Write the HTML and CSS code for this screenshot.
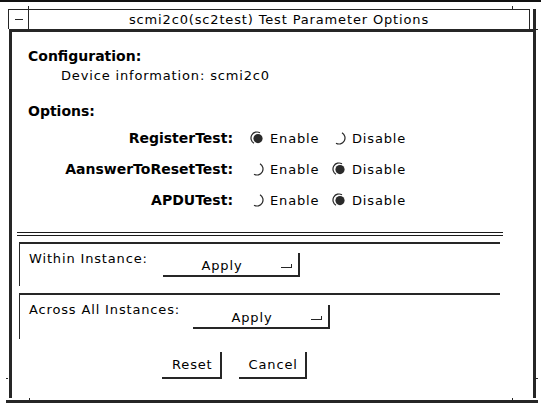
FILE: index.html
```html
<!DOCTYPE html>
<html>
<head>
<meta charset="utf-8">
<link rel="stylesheet" href="styles.css">
</head>
<body>
<div class="topline"></div>
<div class="window">
  <span class="tick tick-top1"></span>
  <span class="tick tick-top2"></span>
  <span class="tick tick-rtop"></span>
  <span class="tick tick-left"></span>
  <span class="tick tick-right"></span>
  <span class="tick tick-bot1"></span>
  <span class="tick tick-bot2"></span>
  <div class="titlebar">
    <div class="minbox"><span class="dash"></span></div>
    <div class="title">scmi2c0(sc2test) Test Parameter Options</div>
  </div>
  <div class="client">
    <div class="config">
      <h2 class="heading">Configuration:</h2>
      <p class="info">Device information: scmi2c0</p>
      <h2 class="heading opts-head">Options:</h2>
      <div class="options">
        <div class="opt-label">RegisterTest:</div>
        <div class="radio"><svg class="rb" viewBox="0 0 14 14"><path d="M10 1.8 A6 6 0 0 0 4 12.2" /><circle cx="8" cy="7.6" r="4.6"/></svg><span>Enable</span></div>
        <div class="radio"><svg class="rb" viewBox="0 0 14 14"><path d="M4 12.2 A6 6 0 0 0 10 1.8" /></svg><span>Disable</span></div>

        <div class="opt-label">AanswerToResetTest:</div>
        <div class="radio"><svg class="rb" viewBox="0 0 14 14"><path d="M4 12.2 A6 6 0 0 0 10 1.8" /></svg><span>Enable</span></div>
        <div class="radio"><svg class="rb" viewBox="0 0 14 14"><path d="M10 1.8 A6 6 0 0 0 4 12.2" /><circle cx="8" cy="7.6" r="4.6"/></svg><span>Disable</span></div>

        <div class="opt-label">APDUTest:</div>
        <div class="radio"><svg class="rb" viewBox="0 0 14 14"><path d="M4 12.2 A6 6 0 0 0 10 1.8" /></svg><span>Enable</span></div>
        <div class="radio"><svg class="rb" viewBox="0 0 14 14"><path d="M10 1.8 A6 6 0 0 0 4 12.2" /><circle cx="8" cy="7.6" r="4.6"/></svg><span>Disable</span></div>
      </div>
    </div>
    <div class="sep"></div>
    <div class="group group-within">
      <div class="g-label">Within Instance:</div>
      <div class="menubtn"><span class="mb-text">Apply</span><span class="mark"></span></div>
    </div>
    <div class="group group-across">
      <div class="g-label">Across All Instances:</div>
      <div class="menubtn"><span class="mb-text">Apply</span><span class="mark"></span></div>
    </div>
    <div class="actions">
      <div class="btn">Reset</div>
      <div class="btn">Cancel</div>
    </div>
  </div>
</div>
<div class="bottomline"></div>
</body>
</html>
```
FILE: styles.css
```css
html, body {
  margin: 0;
  padding: 0;
  background: #ffffff;
}
body {
  width: 541px;
  height: 408px;
  overflow: hidden;
  font-family: "DejaVu Sans", "Liberation Sans", sans-serif;
  color: #000;
}
.topline {
  height: 2px;
  background: #111;
}
.window {
  position: relative;
  margin: 7px 0 0 8px;
  width: 525px;
  height: 389px;
  border-right: 3px solid #262626;
  display: flex;
  flex-direction: column;
}
.tick {
  position: absolute;
  background: #262626;
}
.tick-top1 { left: 20px; top: -3px; width: 1px; height: 3px; }
.tick-top2 { left: 504px; top: -3px; width: 1px; height: 3px; }
.tick-rtop { left: 528px; top: 20px; width: 2px; height: 1px; }
.tick-left { left: -2px; top: 369px; width: 2px; height: 1px; }
.tick-right { left: 528px; top: 369px; width: 2px; height: 1px; }
.tick-bot1 { left: 21px; top: 389px; width: 1px; height: 2px; }
.tick-bot2 { left: 504px; top: 389px; width: 1px; height: 2px; }

.titlebar {
  height: 19px;
  margin-right: 3px;
  border-top: 1px solid #262626;
  border-left: 1px solid #262626;
  border-right: 1px solid #262626;
  display: flex;
}
.minbox {
  width: 19px;
  border-right: 1px solid #262626;
  display: flex;
  align-items: center;
  justify-content: center;
}
.dash {
  width: 8px;
  height: 1px;
  background: #262626;
}
.title {
  flex: 1;
  text-align: center;
  font-size: 13px;
  letter-spacing: 0.85px;
  line-height: 19px;
  white-space: nowrap;
}
.client {
  flex: 1;
  margin-left: 1px;
  border-top: 3px solid #262626;
  border-left: 3px solid #262626;
  display: flex;
  flex-direction: column;
}
.config {
  padding: 16px 0 0 16px;
}
.heading {
  margin: 0;
  font-size: 14px;
  font-weight: bold;
  line-height: 16px;
}
.opts-head {
  margin-top: 19px;
}
.info {
  margin: 4px 0 0 33px;
  font-size: 13px;
  letter-spacing: 0.85px;
  line-height: 16px;
}
.options {
  margin-top: 7px;
  display: grid;
  grid-template-columns: 222px 82px auto;
  grid-auto-rows: 24px;
  row-gap: 7px;
}
.opt-label {
  text-align: right;
  padding-right: 17px;
  font-size: 14px;
  font-weight: bold;
  line-height: 24px;
  white-space: nowrap;
}
.radio {
  display: flex;
  align-items: center;
  gap: 6px;
  font-size: 13px;
  letter-spacing: 0.85px;
}
.rb {
  width: 14px;
  height: 14px;
  flex: none;
}
.rb path {
  fill: none;
  stroke: #262626;
  stroke-width: 1.2;
}
.rb circle {
  fill: #2a2a2a;
}
.sep {
  margin: 20px 0 0 5px;
  width: 486px;
  height: 2px;
  border-top: 1px solid #1a1a1a;
  border-bottom: 1px solid #1a1a1a;
}
.group {
  margin: 6px 0 0 7px;
  width: 471px;
  height: 42px;
  border-top: 2px solid #262626;
  border-left: 1px solid #262626;
  display: flex;
  align-items: flex-start;
  padding-left: 9px;
  box-sizing: content-box;
}
.group-across {
  margin-top: 7px;
  height: 44px;
}
.g-label {
  margin-top: 7px;
  font-size: 13px;
  letter-spacing: 0.85px;
  line-height: 16px;
  white-space: nowrap;
}
.group-within .g-label { width: 134px; }
.group-across .g-label { width: 164px; }
.menubtn {
  margin-top: 9px;
  width: 135px;
  height: 22px;
  border-right: 2px solid #262626;
  border-bottom: 2px solid #262626;
  display: flex;
  align-items: center;
}
.group-across .menubtn {
  margin-top: 10px;
}
.mb-text {
  flex: 1;
  text-align: center;
  font-size: 13px;
  letter-spacing: 0.85px;
  padding-top: 2px;
}
.mark {
  width: 10px;
  height: 3px;
  margin: 4px 6px 0 0;
  border-bottom: 1px solid #262626;
  border-right: 1px solid #262626;
}
.actions {
  margin-top: 13px;
  padding-left: 150px;
  display: flex;
  gap: 17px;
}
.btn {
  height: 25px;
  line-height: 25px;
  padding: 0 7px 0 10px;
  border-right: 2px solid #262626;
  border-bottom: 2px solid #262626;
  font-size: 13px;
  letter-spacing: 0.85px;
}
.bottomline {
  margin: 2px 0 0 6px;
  width: 532px;
  height: 3px;
  background: #262626;
}
```
